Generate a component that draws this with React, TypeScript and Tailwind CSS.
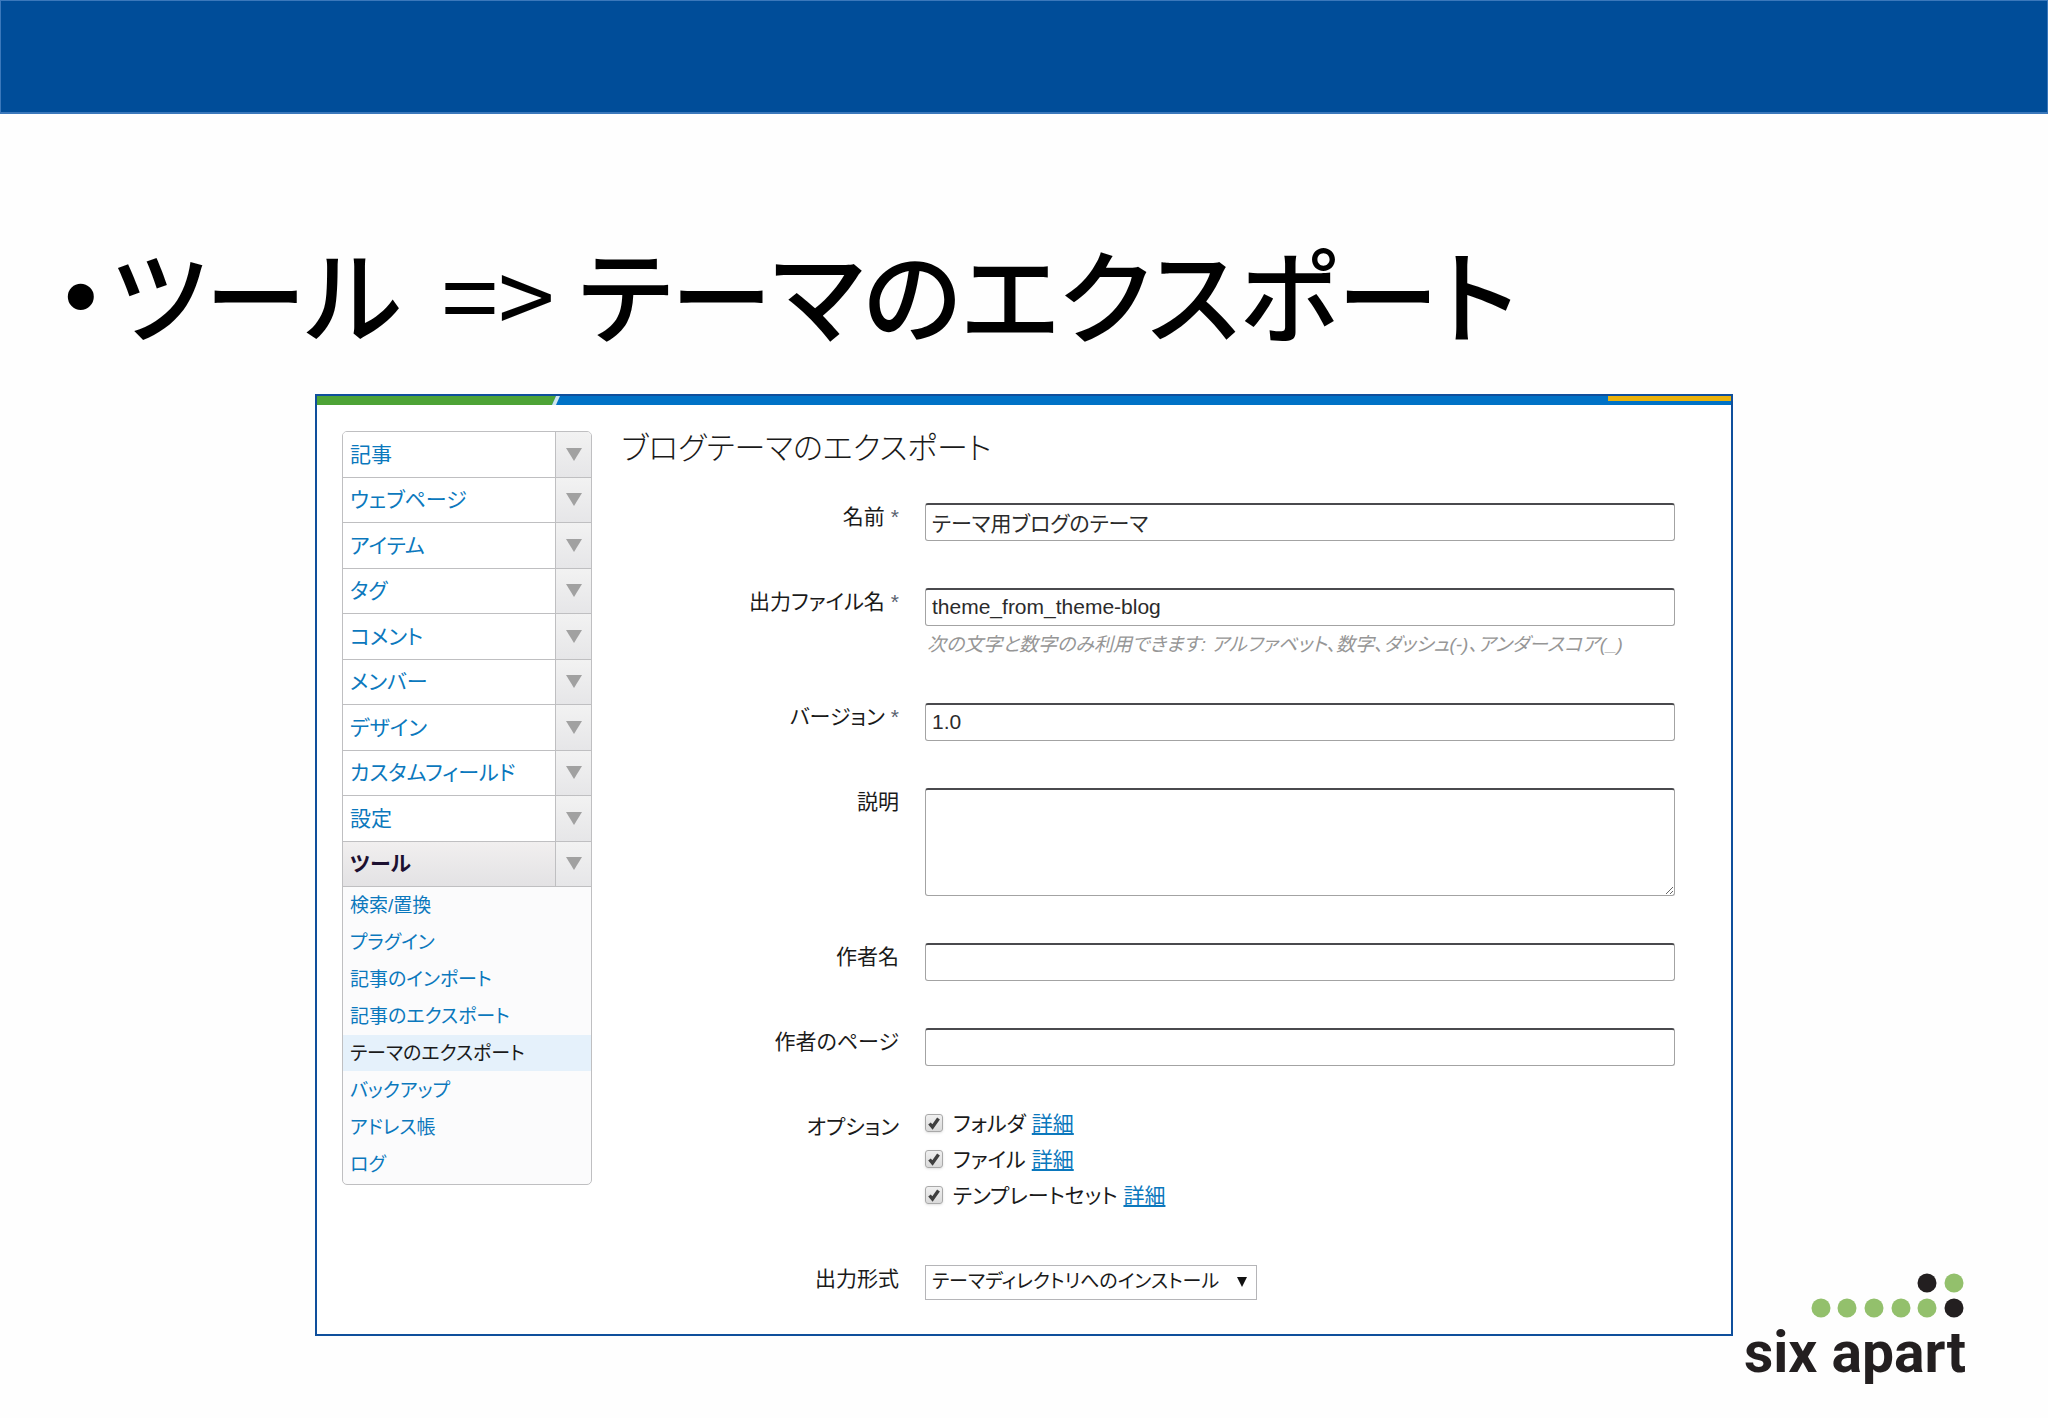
import type { ReactNode } from 'react'

const menuItems = [
  '記事',
  'ウェブページ',
  'アイテム',
  'タグ',
  'コメント',
  'メンバー',
  'デザイン',
  'カスタムフィールド',
  '設定',
  'ツール',
]

const toolItems = [
  '検索/置換',
  'プラグイン',
  '記事のインポート',
  '記事のエクスポート',
  'テーマのエクスポート',
  'バックアップ',
  'アドレス帳',
  'ログ',
]

const options = [
  { id: 'folder', label: 'フォルダ' },
  { id: 'file', label: 'ファイル' },
  { id: 'templates', label: 'テンプレートセット' },
]

const inputClass =
  'block h-[38px] w-full rounded-[3px] border border-[#a3a3a3] border-t-2 border-t-[#4a4a4e] bg-white px-1.5 pb-0.5 text-[21px] text-[#2b2b2b] outline-none'

function Sidebar() {
  return (
    <nav className="w-[250px] shrink-0 self-start overflow-hidden rounded-[5px] border border-[#bfbfc1] bg-[#fbfbfc] pb-0.5">
      <ul className="grid h-[455px] auto-rows-fr">
        {menuItems.map((item) => {
          const active = item === 'ツール'
          return (
            <li key={item} className="flex border-b border-[#bfbfc1]">
              <a
                href="#"
                className={`flex flex-1 items-center pl-[7px] text-[21px] leading-none ${
                  active
                    ? 'bg-linear-to-b from-[#f1efef] to-[#e3e2e4] font-bold text-[#1c1030]'
                    : 'bg-white text-[#0b78bd]'
                }`}
              >
                {item}
              </a>
              <button
                type="button"
                aria-label={`${item}を開く`}
                className="flex w-9 items-center justify-center border-l border-[#bfbfc1] bg-linear-to-b from-[#f2f2f2] to-[#e6e6e8]"
              >
                <svg width="16" height="13" viewBox="0 0 16 13">
                  <path d="M0 0h16L8 13z" fill="#a1a1a1" />
                </svg>
              </button>
            </li>
          )
        })}
      </ul>
      <ul className="flex flex-col gap-px">
        {toolItems.map((item) => (
          <li key={item}>
            <a
              href="#"
              className={`flex h-9 items-center pl-[7px] text-[19px] leading-none ${
                item === 'テーマのエクスポート' ? 'bg-[#e5f1fb] text-[#1a1a1a]' : 'text-[#0b78bd]'
              }`}
            >
              {item}
            </a>
          </li>
        ))}
      </ul>
    </nav>
  )
}

function Field({
  id,
  label,
  required,
  children,
}: {
  id: string
  label: string
  required?: boolean
  children: ReactNode
}) {
  return (
    <div className="flex gap-[26px]">
      <label htmlFor={id} className="w-[278px] shrink-0 text-right text-[21px] leading-7">
        {label}
        {required && <span className="ml-1.5 leading-none text-[#5a6270]">*</span>}
      </label>
      <div className="min-w-0 flex-1">{children}</div>
    </div>
  )
}

function ExportForm() {
  return (
    <form className="flex min-w-0 flex-1 flex-col">
      <h2 className="text-[31px] leading-9 font-light">ブログテーマのエクスポート</h2>
      <div className="mt-9 flex flex-col gap-[47px]">
        <Field id="name" label="名前" required>
          <input id="name" defaultValue="テーマ用ブログのテーマ" className={inputClass} />
        </Field>
        <Field id="output" label="出力ファイル名" required>
          <input id="output" defaultValue="theme_from_theme-blog" className={inputClass} />
          <p className="-mb-1 pt-1 pl-0.5 text-[19px] leading-[30px] whitespace-nowrap text-[#969696] italic">
            次の文字と数字のみ利用できます: アルファベット、数字、ダッシュ(-)、アンダースコア(_)
          </p>
        </Field>
        <Field id="version" label="バージョン" required>
          <input id="version" defaultValue="1.0" className={inputClass} />
        </Field>
        <Field id="description" label="説明">
          <textarea
            id="description"
            className="block h-[108px] w-full rounded-[3px] border border-t-2 border-[#a3a3a3] border-t-[#4a4a4e] bg-white outline-none"
          />
        </Field>
        <Field id="author" label="作者名">
          <input id="author" className={inputClass} />
        </Field>
        <Field id="page" label="作者のページ">
          <input id="page" className={inputClass} />
        </Field>
        <Field id="folder" label="オプション">
          <ul className="flex flex-col gap-[18px] pt-px pb-[14px]">
            {options.map((option) => (
              <li key={option.id} className="flex h-[18px] items-center text-[21px] leading-none">
                <span className="relative mr-2.5 h-[18px] w-[18px]">
                  <input
                    id={option.id}
                    type="checkbox"
                    defaultChecked
                    className="block h-[18px] w-[18px] appearance-none rounded-[3px] border border-[#a9a9a9] bg-linear-to-b from-[#f0f0f0] to-[#dadada] shadow-sm"
                  />
                  <svg viewBox="0 0 18 18" className="pointer-events-none absolute inset-0">
                    <path
                      d="M4.5 9.5 7.5 13 13.5 4.5"
                      fill="none"
                      stroke="#3f3f3f"
                      strokeWidth="3.4"
                    />
                  </svg>
                </span>
                <label htmlFor={option.id}>{option.label}</label>
                <a href="#" className="ml-1.5 text-[#0b78bd] underline underline-offset-2">
                  詳細
                </a>
              </li>
            ))}
          </ul>
        </Field>
        <Field id="format" label="出力形式">
          <div className="relative w-[332px]">
            <select
              id="format"
              className="block h-[35px] w-full appearance-none border border-[#b5b5b8] bg-white pl-1.5 text-[19px] outline-none"
            >
              <option>テーマディレクトリへのインストール</option>
            </select>
            <svg
              viewBox="0 0 10 10"
              className="pointer-events-none absolute top-3 right-2.5 h-2.5 w-2.5"
            >
              <path d="M0 0h10L5 10z" fill="#111" />
            </svg>
          </div>
        </Field>
      </div>
    </form>
  )
}

function Logo() {
  return (
    <svg
      width="220"
      height="124"
      viewBox="0 0 220 124"
      role="img"
      aria-label="six apart"
      className="shrink-0"
    >
      <g fill="#93c06c">
        <circle cx="76" cy="46" r="9.5" />
        <circle cx="102" cy="46" r="9.5" />
        <circle cx="129" cy="46" r="9.5" />
        <circle cx="156" cy="46" r="9.5" />
        <circle cx="182" cy="46" r="9.5" />
        <circle cx="209" cy="21" r="9.5" />
      </g>
      <g fill="#231f20">
        <circle cx="182" cy="21" r="9.5" />
        <circle cx="209" cy="46" r="9.5" />
        <text
          x="-1"
          y="110"
          fontSize="57"
          fontWeight="700"
          fontFamily="Roboto, 'Liberation Sans', sans-serif"
        >
          six apart
        </text>
      </g>
    </svg>
  )
}

export default function App() {
  return (
    <div
      lang="ja"
      className="min-h-screen bg-[#fefefe] font-['Liberation_Sans','Noto_Sans_CJK_JP',sans-serif] text-[#1a1a1a] [font-feature-settings:'palt']"
    >
      <header className="h-[114px] border border-b-2 border-[#3b78bb] bg-[#004d99]" />
      <h1 className="flex pt-[118px] pl-[64px] font-['Noto_Sans_CJK_JP',sans-serif] text-[102px] leading-[120px] font-medium text-black">
        <span className="mr-3 pt-1 font-['Liberation_Sans',sans-serif] text-[96px]">•</span>
        <span className="mr-10 ml-0.5">ツール</span>
        <span className="mr-6 font-normal">=&gt;</span>
        <span>テーマのエクスポート</span>
      </h1>
      <main className="mt-[38px] flex items-end gap-3 pr-[83px] pl-[315px]">
        <section className="mb-[50px] min-w-0 flex-1 border-2 border-[#0f4f9c] bg-white">
          <div className="flex h-[9px] bg-[#0072c6]">
            <svg width="243" height="9" viewBox="0 0 243 9">
              <path d="M0 0h239l-4 9H0z" fill="#4da336" />
              <path d="M239 0h4l-4 9h-4z" fill="#cfe6ee" />
            </svg>
            <div className="ml-auto h-[5px] w-[123px] bg-[#e9b10b]" />
          </div>
          <div className="flex gap-[29px] pt-[26px] pr-14 pb-[34px] pl-[25px]">
            <Sidebar />
            <ExportForm />
          </div>
        </section>
        <Logo />
      </main>
    </div>
  )
}
